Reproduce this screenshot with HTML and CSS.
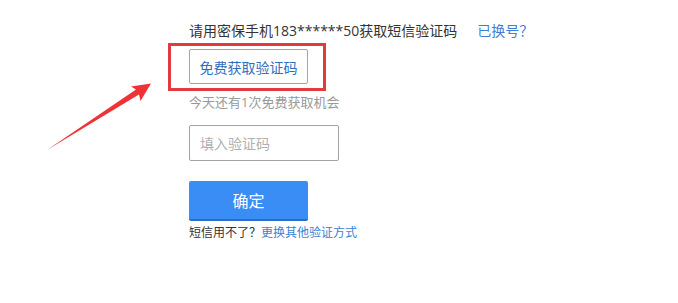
FILE: index.html
```html
<!DOCTYPE html>
<html lang="zh-CN">
<head>
<meta charset="utf-8">
<title>短信验证</title>
<link rel="stylesheet" href="styles.css">
</head>
<body>
<div class="page">
  <div class="form">
    <div class="title-row">
      <span class="title">请用密保手机183******50获取短信验证码</span>
      <a class="link change" href="#">已换号？</a>
    </div>
    <div class="get-wrap">
      <button class="get-btn" type="button">免费获取验证码</button>
      <div class="highlight"></div>
    </div>
    <div class="hint">今天还有1次免费获取机会</div>
    <input class="code-input" type="text" placeholder="填入验证码">
    <button class="ok-btn" type="button">确定</button>
    <div class="foot">短信用不了？<a class="link" href="#">更换其他验证方式</a></div>
  </div>
  <svg class="arrow" width="160" height="160" viewBox="0 0 160 160">
    <polygon points="47,150 136,89.5 131,86.5 151,83.5 140.5,101 139,94.5" fill="#ee3236"/>
  </svg>
</div>
</body>
</html>
```
FILE: styles.css
```css
html, body {
  margin: 0;
  padding: 0;
  background: #ffffff;
}
body {
  font-family: "Open Sans", "Noto Sans CJK SC", sans-serif;
  color: #333333;
  text-spacing-trim: space-all;
}
.page {
  position: relative;
  width: 678px;
  height: 303px;
  overflow: hidden;
}
.form {
  padding: 21px 0 0 189px;
  display: flex;
  flex-direction: column;
  align-items: flex-start;
}
.title-row {
  display: flex;
  align-items: center;
  height: 20px;
  font-size: 14px;
  line-height: 20px;
}
.title {
  color: #333333;
}
.link {
  color: #3b7fd6;
  text-decoration: none;
}
.change {
  margin-left: 20px;
}
.get-wrap {
  position: relative;
  margin-top: 8px;
}
.get-btn {
  display: block;
  width: 119px;
  height: 35px;
  padding: 0;
  border: 1px solid #8ea8c8;
  border-radius: 2px;
  background: #ffffff;
  color: #2f6fc0;
  font-family: inherit;
  font-size: 14px;
  text-spacing-trim: space-all;
}
.highlight {
  position: absolute;
  left: -21px;
  top: -6px;
  width: 152px;
  height: 42px;
  border: 3px solid #e13a3f;
}
.hint {
  margin-top: 9px;
  font-size: 13px;
  line-height: 18px;
  color: #999999;
}
.code-input {
  margin-top: 14px;
  width: 150px;
  height: 36px;
  box-sizing: border-box;
  border: 1px solid #a3a3a3;
  border-radius: 2px;
  padding: 0 10px;
  font-family: inherit;
  font-size: 14px;
  color: #333333;
  outline: none;
}
.code-input::placeholder {
  color: #b0b0b0;
}
.ok-btn {
  margin-top: 20px;
  width: 119px;
  height: 40px;
  padding: 0;
  border: none;
  border-bottom: 2px solid #2a6cc9;
  border-radius: 2px;
  background: #3a8df5;
  color: #ffffff;
  font-family: inherit;
  font-size: 16px;
}
.foot {
  margin-top: 4px;
  font-size: 12px;
  line-height: 16px;
  color: #333333;
}
.arrow {
  position: absolute;
  left: 0;
  top: 0;
}
```
